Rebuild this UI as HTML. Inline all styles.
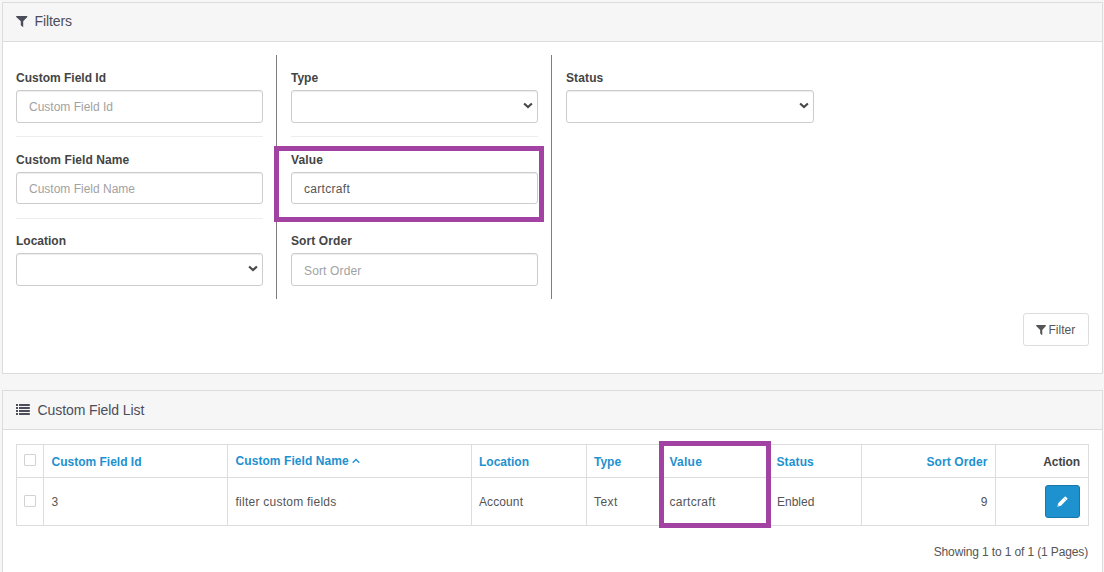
<!DOCTYPE html>
<html>
<head>
<meta charset="utf-8">
<title>Custom Fields</title>
<style>
*{box-sizing:border-box;margin:0;padding:0}
html,body{width:1104px;height:572px;overflow:hidden}
body{background:#f6f6f6;font-family:"Liberation Sans",sans-serif;font-size:12px;color:#666;position:relative}
.abs{position:absolute}
.panel{position:absolute;left:2px;width:1101px;background:#fff;border:1px solid #dcdcdc}
.phead{position:absolute;left:0;top:0;right:0;background:#f6f6f6;border-bottom:1px solid #dcdcdc;border-radius:2px 2px 0 0}
.t{position:absolute;white-space:nowrap;line-height:16px;height:16px}
.title{font-size:14px;color:#4c4d5a}
.lbl{font-weight:700;color:#444}
.ph{color:#a2a2a2}
.inp{position:absolute;height:33px;width:247px;border:1px solid #ccc;border-radius:3px;background:#fff;box-shadow:inset 0 1px 1px rgba(0,0,0,.075)}
.hr{position:absolute;height:1px;background:#ededed;width:247px}
.vline{position:absolute;width:1px;background:#7e7e7e}
.hl{position:absolute;border:5px solid #a243a3}
.th{font-weight:700;color:#1e91cf}
.td{color:#555}
.cell{position:absolute;border-right:1px solid #ddd}
.chev{position:absolute}
</style>
</head>
<body>

<!-- Filters panel -->
<div class="panel" style="top:2px;height:372px">
  <div class="phead" style="height:39px"></div>
</div>
<svg class="abs" style="left:16px;top:16px" width="12" height="12" viewBox="0 0 12 12"><path d="M0.2 0h11.1v1L7.2 5.3v5.9L4.8 9.2V5.3L0.2 1z" fill="#4c4d5a"/></svg>
<div class="t title" style="left:34.5px;top:13px;letter-spacing:-0.1px">Filters</div>

<!-- column 1 -->
<div class="t lbl" style="left:16px;top:70px">Custom Field Id</div>
<div class="inp" style="left:16px;top:90px"></div>
<div class="t ph" style="left:29px;top:99px">Custom Field Id</div>
<div class="hr" style="left:16px;top:136px"></div>
<div class="t lbl" style="left:16px;top:152px;letter-spacing:0.07px">Custom Field Name</div>
<div class="inp" style="left:16px;top:172px;height:32px"></div>
<div class="t ph" style="left:29px;top:181px">Custom Field Name</div>
<div class="hr" style="left:16px;top:218px"></div>
<div class="t lbl" style="left:16px;top:233px">Location</div>
<div class="inp" style="left:16px;top:253px"></div>
<svg class="chev" style="left:248px;top:265.3px" width="10" height="8" viewBox="0 0 10 8"><path d="M1.1 1.5l3.9 3.6 3.9-3.6" fill="none" stroke="#484848" stroke-width="2.15"/></svg>

<!-- dividers -->
<div class="vline" style="left:276px;top:55px;height:244px"></div>
<div class="vline" style="left:551px;top:55px;height:244px"></div>

<!-- column 2 -->
<div class="t lbl" style="left:291px;top:70px">Type</div>
<div class="inp" style="left:291px;top:90px"></div>
<svg class="chev" style="left:523px;top:102.3px" width="10" height="8" viewBox="0 0 10 8"><path d="M1.1 1.5l3.9 3.6 3.9-3.6" fill="none" stroke="#484848" stroke-width="2.15"/></svg>
<div class="hr" style="left:291px;top:136px"></div>
<div class="t lbl" style="left:291px;top:152px;letter-spacing:0.16px">Value</div>
<div class="inp" style="left:291px;top:172px;height:32px"></div>
<div class="t" style="left:304px;top:181px;color:#555;letter-spacing:0.3px">cartcraft</div>
<div class="hr" style="left:291px;top:218px"></div>
<div class="t lbl" style="left:291px;top:233px;letter-spacing:0.1px">Sort Order</div>
<div class="inp" style="left:291px;top:253px"></div>
<div class="t ph" style="left:304px;top:263px;letter-spacing:0.15px">Sort Order</div>
<div class="hl" style="left:274px;top:146px;width:270px;height:76px"></div>

<!-- column 3 -->
<div class="t lbl" style="left:566px;top:70px;letter-spacing:0.12px">Status</div>
<div class="inp" style="left:566px;top:90px;width:248px"></div>
<svg class="chev" style="left:799px;top:102.3px" width="10" height="8" viewBox="0 0 10 8"><path d="M1.1 1.5l3.9 3.6 3.9-3.6" fill="none" stroke="#484848" stroke-width="2.15"/></svg>

<!-- Filter button -->
<div class="abs" style="left:1023px;top:313px;width:66px;height:33px;border:1px solid #ddd;border-radius:3px;background:#fff"></div>
<svg class="abs" style="left:1036px;top:325px" width="10" height="10.4" viewBox="0 0 11.5 11.2" preserveAspectRatio="none"><path d="M0.2 0h11.1v1L7.2 5.3v5.9L4.8 9.2V5.3L0.2 1z" fill="#555"/></svg>
<div class="t" style="left:1048.5px;top:322px;color:#555">Filter</div>

<!-- List panel -->
<div class="panel" style="top:390px;height:200px">
  <div class="phead" style="height:39px"></div>
</div>
<svg class="abs" style="left:16px;top:404px" width="15" height="11" viewBox="0 0 15 11"><g fill="#4c4d5a"><rect x="0" y="0" width="2" height="2"/><rect x="3" y="0" width="10.8" height="2"/><rect x="0" y="3" width="2" height="2"/><rect x="3" y="3" width="10.8" height="2"/><rect x="0" y="6" width="2" height="2"/><rect x="3" y="6" width="10.8" height="2"/><rect x="0" y="9" width="2" height="2"/><rect x="3" y="9" width="10.8" height="2"/></g></svg>
<div class="t title" style="left:37.5px;top:402px;letter-spacing:-0.08px">Custom Field List</div>

<!-- table -->
<div class="abs" style="left:16px;top:444px;width:1073px;height:82px;border:1px solid #ddd;background:#fff"></div>
<div class="abs" style="left:16px;top:477px;width:1073px;height:1px;background:#ddd"></div>
<div class="abs" style="left:43px;top:444px;width:1px;height:82px;background:#ddd"></div>
<div class="abs" style="left:227px;top:444px;width:1px;height:82px;background:#ddd"></div>
<div class="abs" style="left:471px;top:444px;width:1px;height:82px;background:#ddd"></div>
<div class="abs" style="left:586px;top:444px;width:1px;height:82px;background:#ddd"></div>
<div class="abs" style="left:768px;top:444px;width:1px;height:82px;background:#ddd"></div>
<div class="abs" style="left:861px;top:444px;width:1px;height:82px;background:#ddd"></div>
<div class="abs" style="left:995px;top:444px;width:1px;height:82px;background:#ddd"></div>

<!-- checkboxes -->
<div class="abs" style="left:24px;top:454px;width:12px;height:12px;border:1px solid #d2d2d2;border-radius:1px;background:#fff"></div>
<div class="abs" style="left:24px;top:495px;width:12px;height:12px;border:1px solid #d2d2d2;border-radius:1px;background:#fff"></div>

<!-- header row -->
<div class="t th" style="left:51.5px;top:454px">Custom Field Id</div>
<div class="t th" style="left:235.5px;top:453px;letter-spacing:0.07px">Custom Field Name</div>
<svg class="abs" style="left:352px;top:458.3px" width="8" height="6" viewBox="0 0 8 6"><path d="M0.7 4.7l3.3-3.2 3.3 3.2" fill="none" stroke="#1e91cf" stroke-width="1.35"/></svg>
<div class="t th" style="left:479px;top:454px">Location</div>
<div class="t th" style="left:594px;top:454px">Type</div>
<div class="t th" style="left:669.5px;top:454px;letter-spacing:0.25px">Value</div>
<div class="t th" style="left:776.5px;top:454px;letter-spacing:0.12px">Status</div>
<div class="t th" style="right:116.5px;top:454px;letter-spacing:0.1px">Sort Order</div>
<div class="t lbl" style="right:24px;top:454px;letter-spacing:-0.1px">Action</div>

<!-- data row -->
<div class="t td" style="left:51.5px;top:494px">3</div>
<div class="t td" style="left:235.5px;top:494px;letter-spacing:0.25px">filter custom fields</div>
<div class="t td" style="left:479px;top:494px;letter-spacing:0.1px">Account</div>
<div class="t td" style="left:594px;top:494px;letter-spacing:0.45px">Text</div>
<div class="t td" style="left:669.5px;top:494px;letter-spacing:0.3px">cartcraft</div>
<div class="t td" style="left:777px;top:494px">Enbled</div>
<div class="t td" style="right:116.5px;top:494px">9</div>

<!-- edit button -->
<div class="abs" style="left:1045px;top:485px;width:35px;height:33px;background:#1e91cf;border:1px solid #1978ab;border-radius:3px"></div>
<svg class="abs" style="left:1057px;top:496px" width="11" height="11" viewBox="0 0 11 11"><g transform="translate(5.5,5.5) rotate(-45)"><path d="M-7.4 0L-4 -1.85H4.9Q5.7 -1.85 5.7 -1.1V1.1Q5.7 1.85 4.9 1.85H-4Z" fill="#fff"/><rect x="3.3" y="-2" width="0.45" height="4" fill="#1e91cf" opacity="0.55"/><circle cx="-5.6" cy="0" r="0.45" fill="#1e91cf" opacity="0.7"/></g></svg>

<div class="hl" style="left:659px;top:441px;width:112px;height:87px"></div>

<div class="t td" style="right:16px;top:544px;letter-spacing:-0.13px">Showing 1 to 1 of 1 (1 Pages)</div>

</body>
</html>
